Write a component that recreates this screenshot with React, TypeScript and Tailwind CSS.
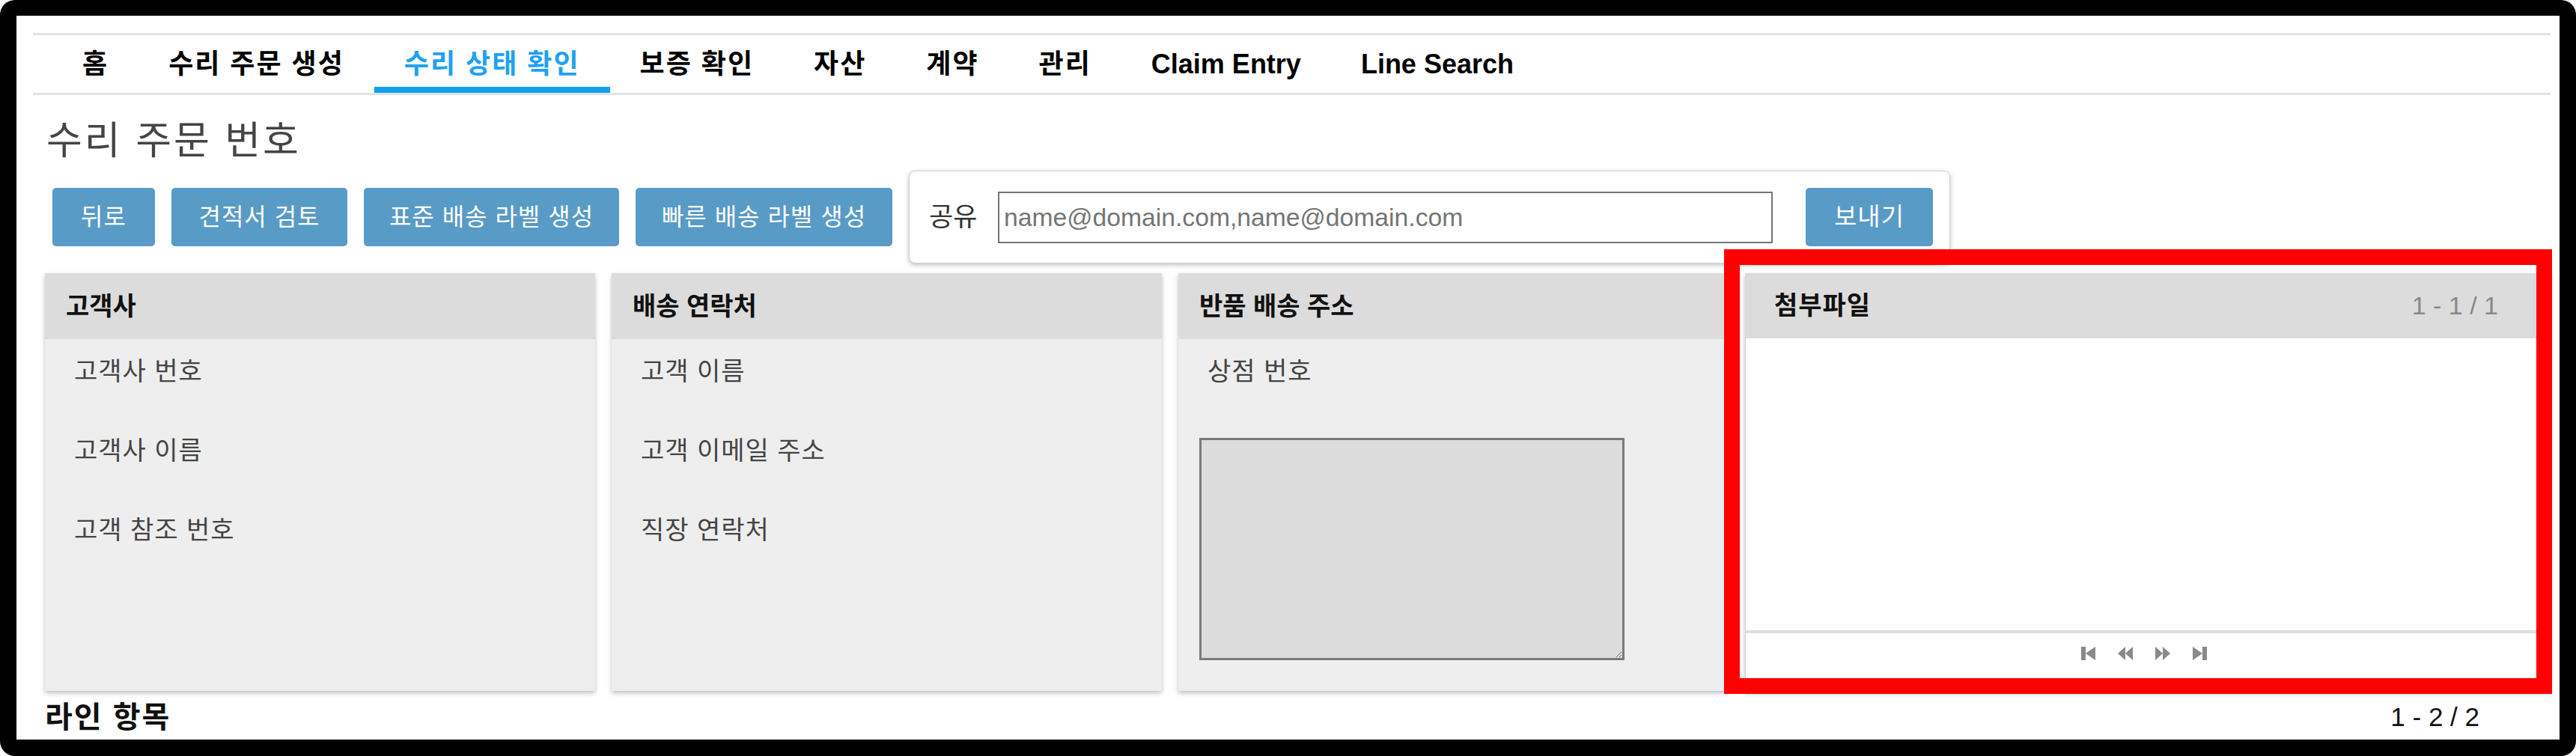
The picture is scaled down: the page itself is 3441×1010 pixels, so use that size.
import React from "react";

const tabs = [
  { label: "홈", ko: true },
  { label: "수리 주문 생성", ko: true },
  { label: "수리 상태 확인", ko: true, active: true },
  { label: "보증 확인", ko: true },
  { label: "자산", ko: true },
  { label: "계약", ko: true },
  { label: "관리", ko: true },
  { label: "Claim Entry" },
  { label: "Line Search" },
];

function Btn({ w, children }: { w: string; children: React.ReactNode }) {
  return (
    <div
      className={`${w} h-[78px] shrink-0 rounded-[5px] bg-[#589bc6] text-white text-[32px] tracking-[1px] flex items-center justify-center`}
    >
      {children}
    </div>
  );
}

function PanelHeader({ children }: { children: React.ReactNode }) {
  return (
    <div className="h-[88px] bg-[#dcdcdc] flex items-center pl-[28px] text-[34px] font-bold text-[#111]">
      {children}
    </div>
  );
}

function Item({ children }: { children: React.ReactNode }) {
  return <div className="leading-[34px] text-[34px] tracking-[1px] text-[#444]">{children}</div>;
}

function Pager() {
  const c = "#8a8a8a";
  return (
    <div className="flex items-center gap-[28px]">
      <svg width="20" height="18" viewBox="0 0 20 18">
        <rect x="0" y="0" width="6" height="18" fill={c} />
        <polygon points="19,0 19,18 6,9" fill={c} />
      </svg>
      <svg width="22" height="18" viewBox="0 0 22 18">
        <polygon points="11,0 11,18 1,9" fill={c} />
        <polygon points="21,0 21,18 11,9" fill={c} />
      </svg>
      <svg width="22" height="18" viewBox="0 0 22 18">
        <polygon points="1,0 1,18 11,9" fill={c} />
        <polygon points="11,0 11,18 21,9" fill={c} />
      </svg>
      <svg width="20" height="18" viewBox="0 0 20 18">
        <polygon points="1,0 1,18 14,9" fill={c} />
        <rect x="14" y="0" width="6" height="18" fill={c} />
      </svg>
    </div>
  );
}

export default function App() {
  return (
    <div className="w-[3441px] h-[1010px] bg-white font-['Liberation_Sans','Noto_Sans_CJK_KR',sans-serif]">
      <div className="relative w-full h-full bg-black rounded-[20px] pt-[21px] pl-[22px] pr-[22px] pb-[22px]">
        <div className="w-full h-full bg-white flex flex-col pl-[22px] pr-[12px] pt-[23px] overflow-hidden">
          {/* Nav */}
          <nav className="border-y-[3px] border-[#e3e3e3] flex pl-[26px]">
            {tabs.map((t) => (
              <div
                key={t.label}
                className={`h-[77px] px-[40px] pt-[8px] flex items-center text-[36px] font-bold border-b-[8px] ${
                  t.ko ? "tracking-[2px]" : ""
                } ${t.active ? "border-[#12a0f0] text-[#1ea2ef]" : "border-transparent text-black"}`}
              >
                {t.label}
              </div>
            ))}
          </nav>

          {/* Content */}
          <div className="flex flex-col pl-[16px]">
            <h1 className="mt-[31px] ml-[2px] text-[52px] leading-[60px] tracking-[3px] text-[#444] font-normal">
              수리 주문 번호
            </h1>

            <div className="mt-[10px] ml-[10px] h-[124px] flex items-center gap-[22px]">
              <Btn w="w-[137px]">뒤로</Btn>
              <Btn w="w-[235px]">견적서 검토</Btn>
              <Btn w="w-[341px]">표준 배송 라벨 생성</Btn>
              <Btn w="w-[343px]">빠른 배송 라벨 생성</Btn>
              <div className="w-[1391px] h-[124px] shrink-0 rounded-[8px] border border-[#d0d0d0] shadow-[0_2px_6px_rgba(0,0,0,0.25)] bg-white flex items-center pl-[26px]">
                <span className="text-[35px] text-[#333] w-[70px]">공유</span>
                <div className="ml-[22px] w-[1035px] h-[69px] border-2 border-[#767676] flex items-center pl-[6px] text-[33.7px] text-[#757575] font-['Liberation_Sans',sans-serif]">
                  name@domain.com,name@domain.com
                </div>
                <div className="ml-[44px] w-[170px] h-[78px] rounded-[5px] bg-[#589bc6] text-white text-[33px] tracking-[1px] flex items-center justify-center">
                  보내기
                </div>
              </div>
            </div>

            {/* Panels */}
            <div className="mt-[13px] flex gap-[22px] h-[558px]">
              <div className="w-[735px] shrink-0 flex flex-col bg-[#eeeeee] shadow-[0_3px_6px_rgba(0,0,0,0.25)]">
                <PanelHeader>고객사</PanelHeader>
                <div className="pl-[39px] pt-[26px] flex flex-col gap-[72px]">
                  <Item>고객사 번호</Item>
                  <Item>고객사 이름</Item>
                  <Item>고객 참조 번호</Item>
                </div>
              </div>
              <div className="w-[735px] shrink-0 flex flex-col bg-[#eeeeee] shadow-[0_3px_6px_rgba(0,0,0,0.25)]">
                <PanelHeader>배송 연락처</PanelHeader>
                <div className="pl-[39px] pt-[26px] flex flex-col gap-[72px]">
                  <Item>고객 이름</Item>
                  <Item>고객 이메일 주소</Item>
                  <Item>직장 연락처</Item>
                </div>
              </div>
              <div className="w-[735px] shrink-0 flex flex-col bg-[#eeeeee] shadow-[0_3px_6px_rgba(0,0,0,0.25)]">
                <PanelHeader>반품 배송 주소</PanelHeader>
                <div className="pl-[39px] pt-[26px]">
                  <Item>상점 번호</Item>
                </div>
                <textarea
                  readOnly
                  className="ml-[28px] mt-[72px] w-[568px] h-[297px] bg-[#dcdcdc] border-[3px] border-[#7a7a7a] outline-none"
                />
              </div>
              <div className="flex-1 flex flex-col bg-white shadow-[0_3px_6px_rgba(0,0,0,0.25)]">
                <div className="h-[87px] bg-[#dcdcdc] flex items-center justify-between pl-[39px] pr-[70px]">
                  <span className="text-[34px] font-bold tracking-[1px] text-[#111]">첨부파일</span>
                  <span className="text-[34px] text-[#888]">1 - 1 / 1</span>
                </div>
                <div className="flex-1 border-x border-[#d4d4d4]" />
                <div className="h-[81px] border-t-[4px] border-[#dedede] border-x border-x-[#d4d4d4] flex items-start justify-center pt-[18px] pr-[10px]">
                  <Pager />
                </div>
              </div>
            </div>

            {/* Bottom row */}
            <div className="mt-[12px] h-[46px] flex items-center justify-between pr-[95px]">
              <span className="text-[40px] font-bold tracking-[2px] text-[#111]">라인 항목</span>
              <span className="text-[35px] text-[#111]">1 - 2 / 2</span>
            </div>
          </div>
        </div>

        {/* Red annotation box */}
        <div className="absolute left-[2303px] top-[333px] w-[1106px] h-[594px] border-[21px] border-[#ff0000] pointer-events-none" />
      </div>
    </div>
  );
}
